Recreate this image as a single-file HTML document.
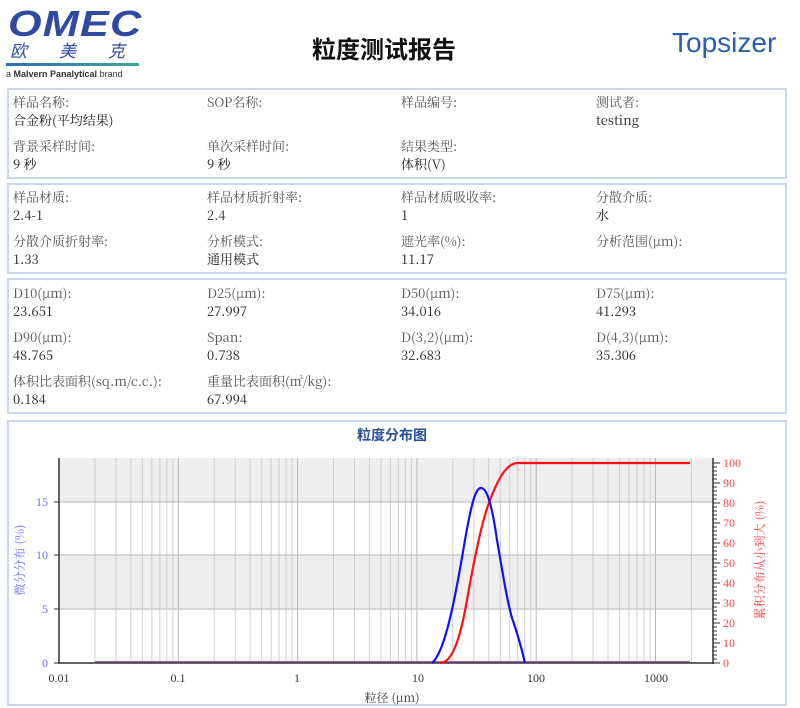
<!DOCTYPE html>
<html><head><meta charset="utf-8"><style>
*{margin:0;padding:0;box-sizing:border-box}
body{width:800px;height:708px;background:#fff;position:relative;overflow:hidden;font-family:"Noto Serif CJK SC","Liberation Serif",serif;color:#333}
.a{position:absolute;white-space:nowrap}
.box{position:absolute;left:7px;width:780px;border:2px solid #c9d8ea}
.l{font-size:13px;line-height:16px;color:#555}
.v{font-size:13px;line-height:16px;color:#222}
</style></head><body>
<div class="a" style="left:8px;top:6px;font:italic bold 36px/36px 'Liberation Sans',sans-serif;color:#2f4aa0;letter-spacing:1px;transform:scaleX(1.2);transform-origin:left">OMEC</div>
<div class="a" style="left:10px;top:40px;font:italic 17px/20px 'Noto Sans CJK SC',sans-serif;color:#2f4aa0;letter-spacing:32px">欧美克</div>
<div class="a" style="left:6px;top:63px;width:133px;height:3px;background:linear-gradient(90deg,#2f6fb0,#3aa89a)"></div>
<div class="a" style="left:6px;top:69px;font:9px 'Liberation Sans',sans-serif;color:#333">a <b>Malvern Panalytical</b> brand</div>
<div class="a" style="left:312px;top:30px;font:bold 24px 'Noto Sans CJK SC',sans-serif;color:#111">粒度测试报告</div>
<div class="a" style="left:672px;top:27px;font:28px 'Liberation Sans',sans-serif;color:#2a5db0">Topsizer</div>

<div class="box" style="top:88px;height:91px"></div>
<div class="box" style="top:183px;height:91px"></div>
<div class="box" style="top:278px;height:136px"></div>
<div class="box" style="top:420px;height:286px"></div>

<div class="a l" style="left:13px;top:94px">样品名称:</div><div class="a v" style="left:13px;top:112px">合金粉(平均结果)</div>
<div class="a l" style="left:207px;top:94px">SOP名称:</div>
<div class="a l" style="left:401px;top:94px">样品编号:</div>
<div class="a l" style="left:596px;top:94px">测试者:</div><div class="a v" style="left:596px;top:112px">testing</div>
<div class="a l" style="left:13px;top:138px">背景采样时间:</div><div class="a v" style="left:13px;top:156px">9 秒</div>
<div class="a l" style="left:207px;top:138px">单次采样时间:</div><div class="a v" style="left:207px;top:156px">9 秒</div>
<div class="a l" style="left:401px;top:138px">结果类型:</div><div class="a v" style="left:401px;top:156px">体积(V)</div>

<div class="a l" style="left:13px;top:189px">样品材质:</div><div class="a v" style="left:13px;top:207px">2.4-1</div>
<div class="a l" style="left:207px;top:189px">样品材质折射率:</div><div class="a v" style="left:207px;top:207px">2.4</div>
<div class="a l" style="left:401px;top:189px">样品材质吸收率:</div><div class="a v" style="left:401px;top:207px">1</div>
<div class="a l" style="left:596px;top:189px">分散介质:</div><div class="a v" style="left:596px;top:207px">水</div>
<div class="a l" style="left:13px;top:233px">分散介质折射率:</div><div class="a v" style="left:13px;top:251px">1.33</div>
<div class="a l" style="left:207px;top:233px">分析模式:</div><div class="a v" style="left:207px;top:251px">通用模式</div>
<div class="a l" style="left:401px;top:233px">遮光率(%):</div><div class="a v" style="left:401px;top:251px">11.17</div>
<div class="a l" style="left:596px;top:233px">分析范围(μm):</div>

<div class="a l" style="left:13px;top:285px">D10(μm):</div><div class="a v" style="left:13px;top:303px">23.651</div>
<div class="a l" style="left:207px;top:285px">D25(μm):</div><div class="a v" style="left:207px;top:303px">27.997</div>
<div class="a l" style="left:401px;top:285px">D50(μm):</div><div class="a v" style="left:401px;top:303px">34.016</div>
<div class="a l" style="left:596px;top:285px">D75(μm):</div><div class="a v" style="left:596px;top:303px">41.293</div>
<div class="a l" style="left:13px;top:329px">D90(μm):</div><div class="a v" style="left:13px;top:347px">48.765</div>
<div class="a l" style="left:207px;top:329px">Span:</div><div class="a v" style="left:207px;top:347px">0.738</div>
<div class="a l" style="left:401px;top:329px">D(3,2)(μm):</div><div class="a v" style="left:401px;top:347px">32.683</div>
<div class="a l" style="left:596px;top:329px">D(4,3)(μm):</div><div class="a v" style="left:596px;top:347px">35.306</div>
<div class="a l" style="left:13px;top:373px">体积比表面积(sq.m/c.c.):</div><div class="a v" style="left:13px;top:391px">0.184</div>
<div class="a l" style="left:207px;top:373px">重量比表面积(㎡/kg):</div><div class="a v" style="left:207px;top:391px">67.994</div>

<svg class="a" style="left:0;top:0" width="800" height="708" id="ch">
<text x="392" y="440" font-size="14" font-weight="bold" fill="#2a4f9a" font-family="Noto Sans CJK SC,sans-serif" text-anchor="middle">粒度分布图</text>
<rect x="59" y="458" width="654" height="44" fill="#eeeeee"/>
<rect x="59" y="555" width="654" height="54" fill="#eeeeee"/>
<g id="grid" stroke="#cfcfcf" stroke-width="1"></g>
<g stroke="#c4c4c4" stroke-width="1.2"><line x1="59" y1="502" x2="713" y2="502"/><line x1="59" y1="555" x2="713" y2="555"/><line x1="59" y1="609" x2="713" y2="609"/></g>
<line x1="59" y1="458" x2="59" y2="664" stroke="#333" stroke-width="1.5"/>
<line x1="59" y1="663" x2="713" y2="663" stroke="#333" stroke-width="1.5"/>
<line x1="713" y1="458" x2="713" y2="664" stroke="#333" stroke-width="1.5"/>
<g stroke="#333"><line x1="54" y1="663" x2="59" y2="663"/><line x1="54" y1="609" x2="59" y2="609"/><line x1="54" y1="555" x2="59" y2="555"/><line x1="54" y1="502" x2="59" y2="502"/></g>
<g id="rt" stroke="#333"></g>
<g font-size="12" fill="#6a6aff" text-anchor="end" font-family="Liberation Serif,serif"><text x="48" y="667">0</text><text x="48" y="613">5</text><text x="48" y="559">10</text><text x="48" y="506">15</text></g>
<text transform="translate(24,560) rotate(-90)" font-size="12" fill="#6a6aff" text-anchor="middle" font-family="Noto Serif CJK SC,serif">微分分布 (%)</text>
<text transform="translate(764,560) rotate(-90)" font-size="12" fill="#ff4040" text-anchor="middle" font-family="Noto Serif CJK SC,serif">累积分布从小到大 (%)</text>
<g id="rl" font-size="12" fill="#ff4040" font-family="Liberation Serif,serif"></g>
<g font-size="12" fill="#333" text-anchor="middle" font-family="Liberation Serif,serif"><text x="59" y="682">0.01</text><text x="178" y="682">0.1</text><text x="297" y="682">1</text><text x="418" y="682">10</text><text x="536" y="682">100</text><text x="656" y="682">1000</text></g>
<text x="392" y="702" font-size="12" fill="#333" text-anchor="middle" font-family="Noto Serif CJK SC,serif">粒径 (μm)</text>
<line x1="95" y1="662" x2="690" y2="662" stroke="#7a3a7a" stroke-width="1.5"/>
<path d="M440,663 C452,663 460,640 467,600 C474,560 482,520 490,500 C500,474 508,463 518,463 L690,463" fill="none" stroke="#ff1010" stroke-width="2.2"/>
<path d="M432,663 C445,652 455,600 465,540 C472,500 476,488 481,488 C487,488 492,505 497,540 C503,575 507,600 512,618 C518,635 522,650 525,663" fill="none" stroke="#1010ff" stroke-width="2.2"/>
</svg>
<script>
var g=document.getElementById('grid'),s='';
for(var e=-2;e<=3;e++)for(var m=1;m<=9;m++){var d=m*Math.pow(10,e);if(d<0.015||d>2500)continue;var x=59+119.3*Math.log10(d/0.01);if(x<60)continue;s+='<line x1="'+x+'" y1="458" x2="'+x+'" y2="663" '+(m==1?'stroke="#b8b8b8"':'')+'/>';}
g.innerHTML=s;
var r='',t='';for(var i=0;i<=50;i++){var y=663-i*4;r+='<line x1="713" y1="'+y+'" x2="'+(i%5==0?720:717)+'" y2="'+y+'"/>';if(i%5==0)t+='<text x="723" y="'+(y+4)+'">'+(i*2)+'</text>';}
document.getElementById('rt').innerHTML=r;document.getElementById('rl').innerHTML=t;
</script>
</body></html>
